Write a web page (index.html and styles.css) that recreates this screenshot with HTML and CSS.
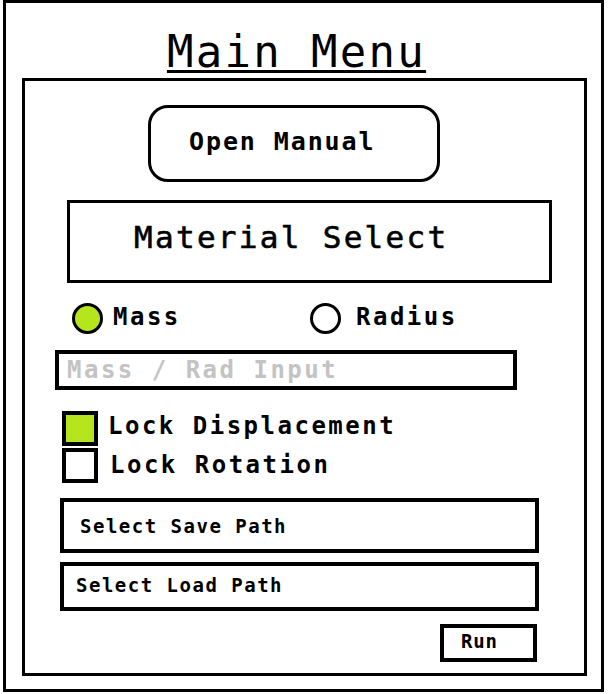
FILE: index.html
```html
<!DOCTYPE html>
<html>
<head>
<meta charset="utf-8">
<link rel="stylesheet" href="styles.css">
</head>
<body>
<div class="frame">
  <div class="title"><span class="title-text">Main Menu</span></div>
  <div class="panel">
    <div class="manual">Open Manual</div>
    <div class="material">Material Select</div>
    <div class="radios">
      <div class="radio first"><span class="dot on"></span><span class="label">Mass</span></div>
      <div class="radio second"><span class="dot"></span><span class="label">Radius</span></div>
    </div>
    <div class="input">Mass / Rad Input</div>
    <div class="check first"><span class="box on"></span><span class="label">Lock Displacement</span></div>
    <div class="check"><span class="box"></span><span class="label rot">Lock Rotation</span></div>
    <div class="path save">Select Save Path</div>
    <div class="path load">Select Load Path</div>
    <div class="run">Run</div>
  </div>
</div>
</body>
</html>
```

FILE: styles.css
```css
* { box-sizing: border-box; }
html, body { margin: 0; padding: 0; background: #fff; }
body { font-family: "DejaVu Sans Mono", monospace; color: #000; }

.frame {
  margin: 0 0 0 3px;
  width: 601px;
  height: 692px;
  border: 3px solid #000;
  display: flex;
  flex-direction: column;
}

.title {
  height: 75px;
  text-align: center;
  padding-top: 27px;
  padding-right: 14px;
}
.title-text {
  font-size: 44px;
  line-height: 44px;
  letter-spacing: 2.3px;
  text-decoration: underline;
  text-decoration-thickness: 3px;
  text-underline-offset: 3px;
}

.panel {
  flex: 1;
  margin: 0 14px 13px 16px;
  border: 3px solid #000;
  display: flex;
  flex-direction: column;
  align-items: flex-start;
  font-weight: bold;
}

.manual {
  margin: 24px 0 0 123px;
  width: 292px;
  height: 77px;
  border: 3px solid #000;
  border-radius: 20px;
  font-size: 25px;
  letter-spacing: 1.9px;
  display: flex;
  align-items: center;
  padding-left: 38px;
  padding-bottom: 4px;
}

.material {
  margin: 18px 0 0 42px;
  width: 485px;
  height: 83px;
  border: 3px solid #000;
  font-size: 31px;
  letter-spacing: 2.3px;
  font-weight: normal;
  -webkit-text-stroke: 0.6px #000;
  display: flex;
  align-items: center;
  padding-left: 64px;
  padding-bottom: 10px;
}

.radios {
  margin: 20px 0 0 47px;
  display: flex;
  align-items: center;
}
.radio {
  display: flex;
  align-items: center;
  gap: 10px;
}
.radio .label { margin-top: -4px; }
.radio.first { width: 238px; }
.radio.second { gap: 15px; }
.dot {
  width: 31px;
  height: 31px;
  border: 3px solid #000;
  border-radius: 50%;
  background: #fff;
}
.dot.on { background: #b5e61d; }
.label {
  font-size: 24px;
  letter-spacing: 2.5px;
}

.input {
  margin: 16px 0 0 30px;
  width: 462px;
  height: 40px;
  border: 4px solid #000;
  color: #c3c3c3;
  font-size: 24px;
  letter-spacing: 2.5px;
  display: flex;
  align-items: center;
  padding-left: 8px;
}

.check {
  display: flex;
  align-items: center;
  gap: 10px;
  margin: 2px 0 0 37px;
}
.check.first { margin-top: 21px; }
.check.first .label { margin-top: -5px; }
.box {
  width: 36px;
  height: 35px;
  border: 4px solid #000;
  background: #fff;
}
.box.on { background: #b5e61d; }
.label.rot { margin-left: 2px; margin-top: -1px; }

.path {
  margin: 0 0 0 35px;
  width: 479px;
  border: 4px solid #000;
  font-size: 19px;
  letter-spacing: 1.5px;
  display: flex;
  align-items: center;
}
.path.save { margin-top: 15px; height: 55px; padding-left: 16px; }
.path.load { margin-top: 9px; height: 49px; padding-left: 12px; padding-bottom: 4px; }

.run {
  margin: 13px 0 0 415px;
  width: 97px;
  height: 38px;
  border: 4px solid #000;
  font-size: 19px;
  letter-spacing: 0.8px;
  display: flex;
  align-items: center;
  padding-left: 17px;
  padding-bottom: 4px;
}
```
